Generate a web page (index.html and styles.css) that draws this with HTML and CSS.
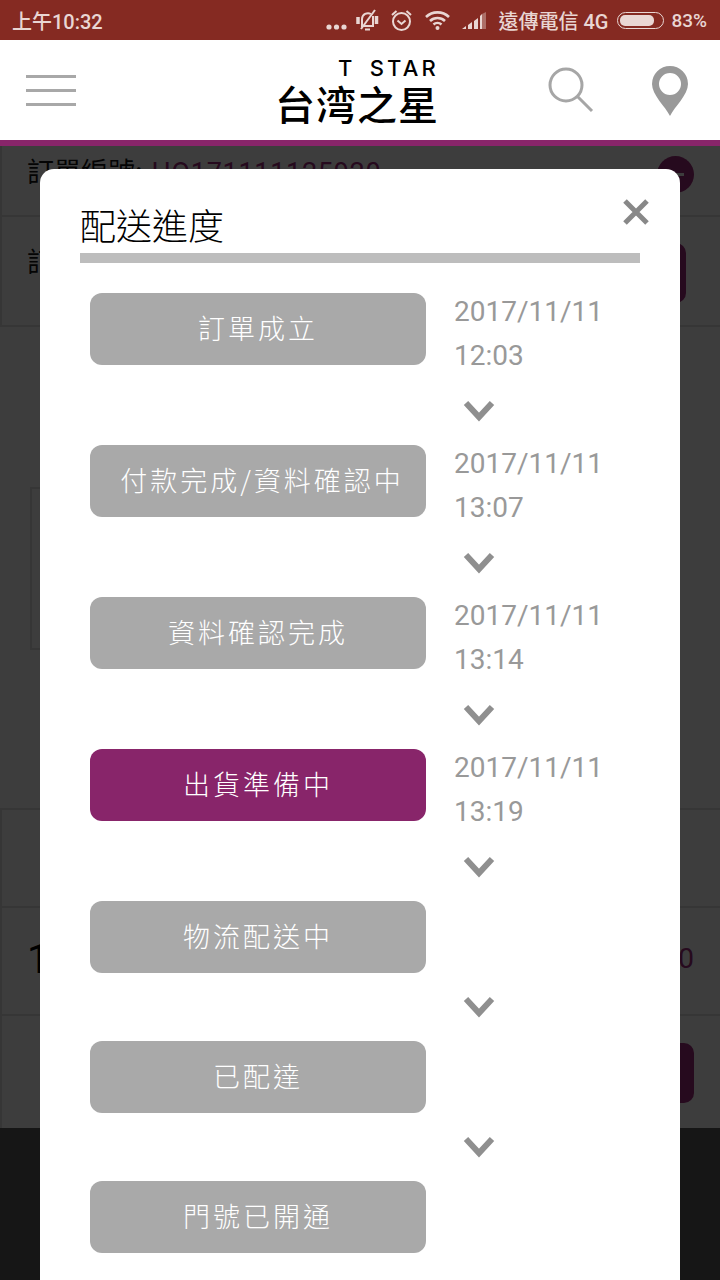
FILE: index.html
```html
<!DOCTYPE html>
<html lang="zh-Hant">
<head>
<meta charset="utf-8">
<title>配送進度</title>
<link rel="stylesheet" href="styles.css">
</head>
<body>
<div class="screen">
  <div class="status">
    <span class="clock">上午10:32</span>
    <div class="status-right">
      <svg class="ic-dots" width="21" height="6" viewBox="0 0 21 6"><circle cx="3" cy="3" r="2.600"/><circle cx="10.500" cy="3" r="2.600"/><circle cx="18" cy="3" r="2.600"/></svg>
      <svg class="ic-bell" width="24" height="24" viewBox="0 0 24 24"><path d="M6 18V11a6 6 0 0 1 9-5" class="ln"/><path d="M17 8v10H5" class="ln"/><path d="M2 9v7M20.500 8v8" class="thick"/><path d="M19 2 5 21" class="ln"/><path d="M9 21.500h5" class="ln"/></svg>
      <svg class="ic-alarm" width="21" height="24" viewBox="0 0 21 24"><circle cx="10.500" cy="13.500" r="8.500" class="ln"/><path d="M6.500 12.500l4 3.500 4-3.500M1 7l4.500-4M20 7l-4.500-4" class="ln"/></svg>
      <svg class="ic-wifi" width="25" height="20" viewBox="0 0 25 20"><path d="M1 7a16.500 16.500 0 0 1 23 0M5 11a11 11 0 0 1 15 0M8.500 14.500a6 6 0 0 1 8 0" class="thick2"/><circle cx="12.500" cy="18" r="2"/></svg>
      <svg class="ic-signal" width="24" height="18" viewBox="0 0 24 18"><path d="M0 17h4v-3zM6 17h4V10l-4 3zM12 17h4V6l-4 3zM18 17h2V2l-2 2z"/><path d="M20 17h4V0l-4 2z" class="faint"/></svg>
      <span class="carrier">遠傳電信 4G</span>
      <div class="battery"><div class="battery-fill"></div></div>
      <span class="pct">83%</span>
    </div>
  </div>

  <header class="topbar">
    <div class="burger"><span></span><span></span><span></span></div>
    <div class="logo">
      <span class="logo-en">T STAR</span>
      <span class="logo-zh">台湾之星</span>
    </div>
    <svg class="ic-search" width="48" height="48" viewBox="0 0 48 48"><circle cx="18" cy="18" r="16"/><path d="M29.500 29.500 44 44"/></svg>
    <svg class="ic-pin" width="36" height="50" viewBox="0 0 36 50"><path fill-rule="evenodd" d="M18 50C13 40 0 29 0 18a18 18 0 0 1 36 0c0 11-13 22-18 32zM18 7a11 11 0 1 0 0 22 11 11 0 0 0 0-22z"/></svg>
  </header>

  <main class="page">
    <div class="row row-order">
      <span class="row-text">訂單編號: <span class="order-no">HQ171111125920</span></span>
      <span class="round-btn"></span>
    </div>
    <div class="row row-date">
      <span class="row-text">訂單狀態</span>
      <span class="act-btn"></span>
    </div>
    <div class="section"><div class="section-box"></div></div>
    <div class="row row-blank"></div>
    <div class="row row-price">
      <span class="big-num">1</span>
      <span class="price">0</span>
    </div>
    <div class="row row-action"><span class="act-btn wide"></span></div>
  </main>
  <footer class="foot"></footer>

  <div class="overlay">
    <section class="dialog">
      <svg class="close" width="28" height="28" viewBox="0 0 28 28"><path d="M3 3 25 25M25 3 3 25"/></svg>
      <h1 class="title">配送進度</h1>
      <div class="steps">
        <div class="step has-time"><div class="pill">訂單成立</div><div class="time">2017/11/11<br>12:03</div></div>
        <div class="arrow"><svg width="32" height="22" viewBox="0 0 32 22"><path d="M3 3 16 17 29 3"/></svg></div>
        <div class="step has-time"><div class="pill pill-long">付款完成/資料確認中</div><div class="time">2017/11/11<br>13:07</div></div>
        <div class="arrow"><svg width="32" height="22" viewBox="0 0 32 22"><path d="M3 3 16 17 29 3"/></svg></div>
        <div class="step has-time"><div class="pill">資料確認完成</div><div class="time">2017/11/11<br>13:14</div></div>
        <div class="arrow"><svg width="32" height="22" viewBox="0 0 32 22"><path d="M3 3 16 17 29 3"/></svg></div>
        <div class="step has-time"><div class="pill current">出貨準備中</div><div class="time">2017/11/11<br>13:19</div></div>
        <div class="arrow"><svg width="32" height="22" viewBox="0 0 32 22"><path d="M3 3 16 17 29 3"/></svg></div>
        <div class="step"><div class="pill">物流配送中</div></div>
        <div class="arrow"><svg width="32" height="22" viewBox="0 0 32 22"><path d="M3 3 16 17 29 3"/></svg></div>
        <div class="step"><div class="pill">已配達</div></div>
        <div class="arrow"><svg width="32" height="22" viewBox="0 0 32 22"><path d="M3 3 16 17 29 3"/></svg></div>
        <div class="step"><div class="pill">門號已開通</div></div>
      </div>
      <p class="note">實際配送進度依物流公司作業時間為準</p>
    </section>
  </div>
</div>
</body>
</html>
```

FILE: styles.css
```css
* { box-sizing: border-box; }
html, body { margin: 0; padding: 0; }
body { font-family: "Noto Sans CJK TC", "Noto Sans", sans-serif; background: #fff; }
.screen { position: relative; width: 720px; height: 1280px; overflow: hidden; display: flex; flex-direction: column; }

/* status bar */
.status { flex: none; height: 40px; background: #852a22; color: #e9d6d3; display: flex; align-items: center; justify-content: space-between; padding: 0 13px 0 12px; font-family: Roboto, "Noto Sans CJK TC", sans-serif; font-weight: 500; }
.clock { font-size: 20px; }
.status-right { display: flex; align-items: center; }
.status-right svg { flex: none; fill: #e9d6d3; }
.status-right .ln { fill: none; stroke: #e9d6d3; stroke-width: 2; }
.status-right .thick { fill: none; stroke: #e9d6d3; stroke-width: 3.500; }
.status-right .thick2 { fill: none; stroke: #e9d6d3; stroke-width: 2.600; }
.status-right .faint { opacity: .4; }
.ic-dots { margin-top: 13px; }
.ic-bell { margin-left: 9px; }
.ic-alarm { margin-left: 11px; }
.ic-wifi { margin-left: 13px; }
.ic-signal { margin-left: 12px; margin-top: 2px; }
.carrier { font-size: 20px; margin-left: 12px; white-space: nowrap; }
.battery { width: 47px; height: 17px; border: 1.500px solid #e9d6d3; border-radius: 9px; padding: 2px; margin-left: 9px; }
.battery-fill { width: 83%; height: 100%; background: #e9d6d3; border-radius: 5px; }
.pct { font-size: 19px; margin-left: 7px; }

/* top bar */
.topbar { flex: none; height: 106px; background: #fff; border-bottom: 6px solid #88256a; position: relative; display: flex; align-items: flex-start; padding-left: 26px; }
.burger { width: 50px; margin-top: 35px; display: flex; flex-direction: column; gap: 11.200px; }
.burger span { display: block; height: 3px; background: #a8a8a8; }
.logo { width: 162px; margin-left: 201px; margin-top: 16px; display: flex; flex-direction: column; align-items: flex-end; color: #000; }
.logo-en { font-family: Inter, "Liberation Sans", sans-serif; font-size: 22px; line-height: 24px; letter-spacing: 3.200px; word-spacing: 5px; font-weight: 500; white-space: nowrap; }
.logo-zh { font-family: "Noto Sans CJK SC", sans-serif; font-size: 40px; line-height: 46px; letter-spacing: 1px; font-weight: 500; white-space: nowrap; }
.ic-search { margin-left: 109px; margin-top: 27px; fill: none; stroke: #a6a6a6; stroke-width: 3; }
.ic-pin { margin-left: 56px; margin-top: 26px; fill: #999; }

/* dimmed page */
.page { flex: none; height: 982px; background: #e2e2e2; display: flex; flex-direction: column; padding-left: 2px; }
.row { background: #fff; display: flex; justify-content: space-between; flex: none; padding: 0 26px 0 25px; }
.row-text { font-size: 27px; line-height: 36px; color: #111; white-space: nowrap; }
.order-no { color: #a02a7c; font-family: Roboto, sans-serif; letter-spacing: .7px; margin-left: 3px; }
.row-order { height: 69px; margin-bottom: 2px; padding-top: 7px; }
.round-btn { width: 37px; height: 37px; border-radius: 50%; background: #a02a7c; margin-top: 3px; display: flex; align-items: center; justify-content: center; }
.round-btn::after { content: ""; width: 16px; height: 3px; background: #fff; }
.row-date { height: 108px; margin-bottom: 2px; padding-top: 26px; padding-right: 34px; }
.act-btn { width: 130px; height: 60px; border-radius: 10px; background: #a02a7c; }
.section { flex: none; height: 481px; background: #fff; padding: 160px 0 0 30px; margin-left: -2px; }
.section-box { width: 640px; height: 163px; border: 2px solid #e2e2e2; }
.row-blank { height: 96px; margin-bottom: 2px; margin-top: 2px; }
.row-price { height: 106px; margin-bottom: 2px; align-items: center; }
.big-num { font-family: Roboto, sans-serif; font-size: 40px; color: #000; padding-bottom: 4px; }
.price { font-family: Roboto, sans-serif; font-size: 28px; color: #a02a7c; padding-bottom: 6px; }
.row-action { height: 112px; padding-top: 27px; justify-content: flex-end; }
.act-btn.wide { width: 140px; }
.foot { flex: none; height: 152px; background: #5c5c5c; }

/* modal */
.overlay { position: absolute; top: 146px; left: 0; right: 0; bottom: 0; background: rgba(0, 0, 0, .76); overflow: hidden; padding: 23px 40px 0; }
.dialog { position: relative; background: #fff; border-radius: 14px 14px 0 0; padding: 31px 40px 40px; }
.close { position: absolute; top: 29px; right: 30px; fill: none; stroke: #888; stroke-width: 5; }
.title { margin: 0 0 5px; font-size: 36px; line-height: 48px; font-weight: 300; color: #000; }
.steps { border-top: 10px solid #bdbdbd; padding-top: 30px; }
.step { display: flex; align-items: flex-start; }
.has-time { height: 84px; }
.pill { flex: none; width: 336px; height: 72px; margin-left: 10px; padding-bottom: 4px; border-radius: 12px; background: #a9a9a9; color: #fff; font-size: 27px; letter-spacing: 3px; font-weight: 300; display: flex; align-items: center; justify-content: center; white-space: nowrap; }
.pill-long { padding-left: 8px; }
.pill.current { background: #88256a; }
.time { margin: -3px 0 0 28px; font-family: Roboto, sans-serif; font-size: 28px; line-height: 44px; color: #999; white-space: nowrap; }
.arrow { height: 68px; padding-left: 383px; display: flex; align-items: center; }
.arrow svg { fill: none; stroke: #8f8f8f; stroke-width: 6; }
.note { margin: 23px 0 0; font-size: 24px; line-height: 36px; color: #888; text-align: center; white-space: nowrap; letter-spacing: 4px; }
```
